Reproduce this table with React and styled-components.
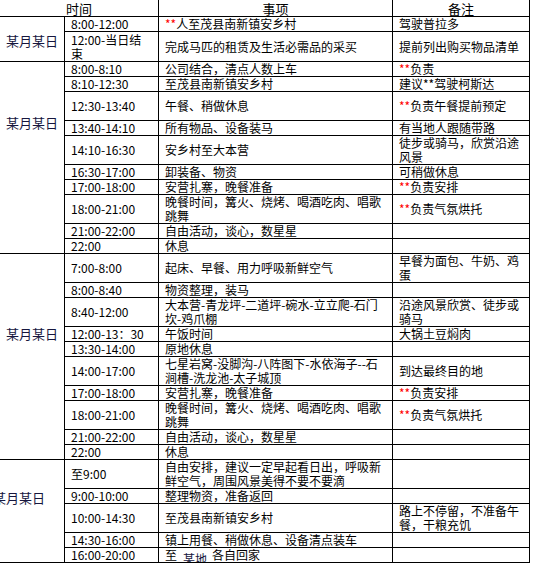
import React from "react";
import styled, { createGlobalStyle } from "styled-components";

const GlobalStyle = createGlobalStyle`
  html, body {
    margin: 0;
    padding: 0;
    background: #fff;
  }
  body {
    font-family: "Noto Sans CJK SC", "Noto Sans", sans-serif;
    color: #000;
  }
`;

const Sheet = styled.table`
  border-collapse: collapse;
  table-layout: fixed;
  width: 530px;
  margin: -1px 0 0 -1px;
  font-size: 12px;
`;

const Row = styled.tr`
  height: ${props => props.$h}px;
`;

const HeadCell = styled.th`
  border: 1px solid #000;
  padding: 0;
  font-weight: normal;
  font-size: 13px;
  line-height: 15px;
  text-align: center;
`;

const Cell = styled.td`
  border: 1px solid #000;
  padding: 0 2px 0 6px;
  line-height: 14px;
  white-space: nowrap;
  vertical-align: middle;
  overflow: hidden;
`;

const DateCell = styled.td`
  border: 1px solid #000;
  padding: ${props => props.$top}px 0 0 6px;
  vertical-align: top;
  text-align: left;
  text-indent: ${props => props.$indent || 0}px;
  font-size: 13px;
  line-height: 16px;
  color: #16163e;
  white-space: nowrap;
`;

const Star = styled.span`
  color: #f00;
`;

const Place = styled.span`
  position: relative;
  top: 4px;
  margin: 0 5px 0 6px;
  color: #16163e;
  text-decoration: underline;
  text-decoration-color: #2a3fb0;
`;

const S = () => <Star>**</Star>;

const two = (a, b) => (
  <>
    {a}
    <br />
    {b}
  </>
);

const dinner = two("晚餐时间，篝火、烧烤、喝酒吃肉、唱歌", "跳舞");

const days = [
  {
    top: 16,
    rows: [
      { h: 15, t: "8:00-12:00", m: <><S />人至茂县南新镇安乡村</>, r: "驾驶普拉多" },
      { h: 30, t: two("12:00-当日结", "束"), m: "完成马匹的租赁及生活必需品的采买", r: "提前列出购买物品清单" },
    ],
  },
  {
    top: 53,
    rows: [
      { h: 15, t: "8:00-8:10", m: "公司结合，清点人数上车", r: <><S />负责</> },
      { h: 15, t: "8:10-12:30", m: "至茂县南新镇安乡村", r: "建议**驾驶柯斯达" },
      { h: 29, t: "12:30-13:40", m: "午餐、稍做休息", r: <><S />负责午餐提前预定</> },
      { h: 15, t: "13:40-14:10", m: "所有物品、设备装马", r: "有当地人跟随带路" },
      { h: 29, t: "14:10-16:30", m: "安乡村至大本营", r: two("徒步或骑马，欣赏沿途", "风景") },
      { h: 15, t: "16:30-17:00", m: "卸装备、物资", r: "可稍做休息" },
      { h: 15, t: "17:00-18:00", m: "安营扎寨，晚餐准备", r: <><S />负责安排</> },
      { h: 29, t: "18:00-21:00", m: dinner, r: <><S />负责气氛烘托</> },
      { h: 15, t: "21:00-22:00", m: "自由活动，谈心，数星星", r: "" },
      { h: 15, t: "22:00", m: "休息", r: "" },
    ],
  },
  {
    top: 72,
    rows: [
      { h: 29, t: "7:00-8:00", m: "起床、早餐、用力呼吸新鲜空气", r: two("早餐为面包、牛奶、鸡", "蛋") },
      { h: 15, t: "8:00-8:40", m: "物资整理，装马", r: "" },
      { h: 29, t: "8:40-12:00", m: two("大本营-青龙坪-二道坪-碗水-立立爬-石门", "坎-鸡爪棚"), r: two("沿途风景欣赏、徒步或", "骑马") },
      { h: 15, t: "12:00-13：30", m: "午饭时间", r: "大锅土豆焖肉" },
      { h: 15, t: "13:30-14:00", m: "原地休息", r: "" },
      { h: 29, t: "14:00-17:00", m: two("七星岩窝-没脚沟-八阵图下-水依海子--石", "涧槽-洗龙池-太子城顶"), r: "到达最终目的地" },
      { h: 15, t: "17:00-18:00", m: "安营扎寨，晚餐准备", r: <><S />负责安排</> },
      { h: 29, t: "18:00-21:00", m: dinner, r: <><S />负责气氛烘托</> },
      { h: 15, t: "21:00-22:00", m: "自由活动，谈心，数星星", r: "" },
      { h: 15, t: "22:00", m: "休息", r: "" },
    ],
  },
  {
    top: 30,
    indent: -13,
    rows: [
      { h: 29, t: "至9:00", m: two("自由安排，建议一定早起看日出，呼吸新", "鲜空气，周围风景美得不要不要滴"), r: "" },
      { h: 15, t: "9:00-10:00", m: "整理物资，准备返回", r: "" },
      { h: 29, t: "10:00-14:30", m: "至茂县南新镇安乡村", r: two("路上不停留，不准备午", "餐，干粮充饥") },
      { h: 15, t: "14:30-16:00", m: "镇上用餐、稍做休息、设备清点装车", r: "" },
      { h: 15, t: "16:00-20:00", m: <>至<Place>某地</Place>各自回家</>, r: "" },
    ],
  },
];

function App() {
  return (
    <>
      <GlobalStyle />
      <Sheet>
        <colgroup>
          <col style={{ width: 65 }} />
          <col style={{ width: 94 }} />
          <col style={{ width: 234 }} />
          <col style={{ width: 137 }} />
        </colgroup>
        <tbody>
          <Row $h={17}>
            <HeadCell colSpan={2}>时间</HeadCell>
            <HeadCell>事项</HeadCell>
            <HeadCell>备注</HeadCell>
          </Row>
          {days.map((day, d) =>
            day.rows.map((row, i) => (
              <Row key={d + "-" + i} $h={row.h}>
                {i === 0 ? (
                  <DateCell rowSpan={day.rows.length} $top={day.top} $indent={day.indent}>
                    某月某日
                  </DateCell>
                ) : null}
                <Cell>{row.t}</Cell>
                <Cell>{row.m}</Cell>
                <Cell>{row.r}</Cell>
              </Row>
            ))
          )}
        </tbody>
      </Sheet>
    </>
  );
}

export default App;
